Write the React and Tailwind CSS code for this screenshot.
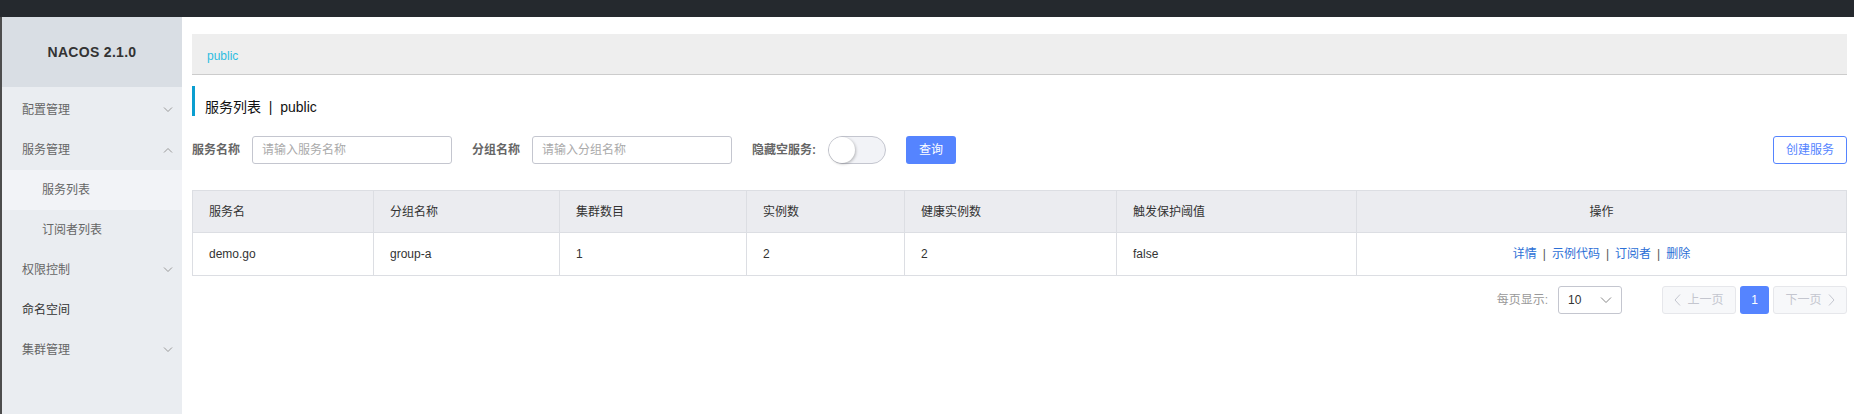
import React from 'react';

const font = { fontFamily: '"Liberation Sans", "Noto Sans CJK SC", sans-serif' };

function Chevron({ up = false }) {
  return (
    <svg width="10" height="6" viewBox="0 0 10 6" className="text-[#999]">
      <path d={up ? 'M1 5.5 L5 1.5 L9 5.5' : 'M1 0.5 L5 4.5 L9 0.5'} fill="none" stroke="currentColor" strokeWidth="1" />
    </svg>
  );
}

function NavItem({ label, chevron, sub, active, dark }) {
  return (
    <div className={`h-[40px] flex items-center justify-between pr-[9px] ${sub ? 'pl-[40px]' : 'pl-[20px]'} ${active ? 'bg-[#f2f3f7]' : ''}`}>
      <span className={`text-[12px] leading-[16px] ${dark ? 'text-[#333]' : 'text-[#666]'}`}>{label}</span>
      {chevron && <Chevron up={chevron === 'up'} />}
    </div>
  );
}

const cols = [
  { label: '服务名', w: 'w-[181px]' },
  { label: '分组名称', w: 'w-[186px]' },
  { label: '集群数目', w: 'w-[187px]' },
  { label: '实例数', w: 'w-[158px]' },
  { label: '健康实例数', w: 'w-[212px]' },
  { label: '触发保护阈值', w: 'w-[240px]' },
];

const row = ['demo.go', 'group-a', '1', '2', '2', 'false'];

export default function App() {
  return (
    <div className="h-[414px] w-[1854px] flex flex-col bg-white overflow-hidden" style={font}>
      <div className="h-[17px] bg-[#25292e] shrink-0" />
      <div className="flex flex-1">
        <div className="w-[2px] bg-[#4d4d4d]" />
        <aside className="w-[180px] bg-[#eaedf1] flex flex-col">
          <div className="h-[70px] bg-[#d9dee4] flex items-center justify-center">
            <span className="text-[14px] font-bold text-[#333] tracking-[0.3px]">NACOS 2.1.0</span>
          </div>
          <div className="pt-[3px]">
            <NavItem label="配置管理" chevron="down" />
            <NavItem label="服务管理" chevron="up" />
            <NavItem label="服务列表" sub active />
            <NavItem label="订阅者列表" sub />
            <NavItem label="权限控制" chevron="down" />
            <NavItem label="命名空间" dark />
            <NavItem label="集群管理" chevron="down" />
          </div>
        </aside>
        <main className="flex-1 pl-[10px] pr-[7px] pt-[17px]">
          <div className="h-[41px] bg-[#eeeeee] border-b border-[#cccccc] flex items-center pl-[15px]">
            <span className="text-[12px] text-[#2fbde0] pt-[4px]">public</span>
          </div>
          <div className="mt-[11px] h-[30px] border-l-[3px] border-[#0a9ed0] pl-[10px] pt-[9px]">
            <span className="text-[14px] leading-[20px] text-[#111]">服务列表&nbsp;&nbsp;|&nbsp;&nbsp;public</span>
          </div>
          <div className="mt-[20px] h-[28px] flex items-center">
            <span className="text-[12px] font-bold text-[#666] w-[60px]">服务名称</span>
            <div className="w-[200px] h-[28px] border border-[#c4c6cf] rounded-[3px] flex items-center pl-[9px]">
              <span className="text-[12px] text-[#aaa]">请输入服务名称</span>
            </div>
            <span className="text-[12px] font-bold text-[#666] ml-[20px] w-[60px]">分组名称</span>
            <div className="w-[200px] h-[28px] border border-[#c4c6cf] rounded-[3px] flex items-center pl-[9px]">
              <span className="text-[12px] text-[#aaa]">请输入分组名称</span>
            </div>
            <span className="text-[12px] font-bold text-[#666] ml-[20px]">隐藏空服务:</span>
            <div className="ml-[12px] w-[58px] h-[28px] rounded-full border border-[#c4c6cf] bg-[#f2f3f7] flex items-center">
              <div className="w-[26px] h-[26px] rounded-full bg-white shadow-[1px_1px_3px_rgba(0,0,0,0.25)]" />
            </div>
            <button className="ml-[20px] w-[50px] h-[28px] rounded-[3px] bg-[#5584ff] text-white text-[12px]">查询</button>
            <div className="flex-1" />
            <button className="w-[74px] h-[28px] rounded-[3px] border border-[#5584ff] bg-white text-[#5584ff] text-[12px]">创建服务</button>
          </div>
          <div className="mt-[26px] border border-[#dcdee3] text-[12px] text-[#333]">
            <div className="flex h-[42px] bg-[#ebecf0] border-b border-[#dcdee3]">
              {cols.map((c) => (
                <div key={c.label} className={`${c.w} shrink-0 border-r border-[#dcdee3] flex items-center pl-[16px]`}>{c.label}</div>
              ))}
              <div className="flex-1 flex items-center justify-center">操作</div>
            </div>
            <div className="flex h-[42px]">
              {row.map((v, i) => (
                <div key={i} className={`${cols[i].w} shrink-0 border-r border-[#dcdee3] flex items-center pl-[16px]`}>{v}</div>
              ))}
              <div className="flex-1 flex items-center justify-center text-[#2c6fd6]">
                <span>详情</span>
                <span className="mx-[6px] text-[#555]">|</span>
                <span>示例代码</span>
                <span className="mx-[6px] text-[#555]">|</span>
                <span>订阅者</span>
                <span className="mx-[6px] text-[#555]">|</span>
                <span>删除</span>
              </div>
            </div>
          </div>
          <div className="mt-[10px] flex justify-end items-center h-[28px] text-[12px]">
            <span className="text-[#999]">每页显示:</span>
            <div className="ml-[10px] w-[64px] h-[28px] border border-[#c4c6cf] rounded-[3px] flex items-center justify-between pl-[9px] pr-[9px]">
              <span className="text-[#333]">10</span>
              <svg width="12" height="7" viewBox="0 0 12 7"><path d="M1 0.5 L6 5.5 L11 0.5" fill="none" stroke="#888" strokeWidth="1" /></svg>
            </div>
            <div className="ml-[40px] w-[74px] h-[28px] border border-[#e6e7eb] bg-[#f7f8fa] rounded-[3px] flex items-center justify-center gap-[6px] text-[#c4c6cf]">
              <svg width="7" height="12" viewBox="0 0 7 12"><path d="M6 0.5 L1 6 L6 11.5" fill="none" stroke="#c4c6cf" strokeWidth="1" /></svg>
              <span>上一页</span>
            </div>
            <div className="ml-[4px] w-[29px] h-[28px] bg-[#5584ff] rounded-[3px] flex items-center justify-center text-white">1</div>
            <div className="ml-[4px] w-[74px] h-[28px] border border-[#e6e7eb] bg-[#f7f8fa] rounded-[3px] flex items-center justify-center gap-[6px] text-[#c4c6cf]">
              <span>下一页</span>
              <svg width="7" height="12" viewBox="0 0 7 12"><path d="M1 0.5 L6 6 L1 11.5" fill="none" stroke="#c4c6cf" strokeWidth="1" /></svg>
            </div>
          </div>
        </main>
      </div>
    </div>
  );
}
